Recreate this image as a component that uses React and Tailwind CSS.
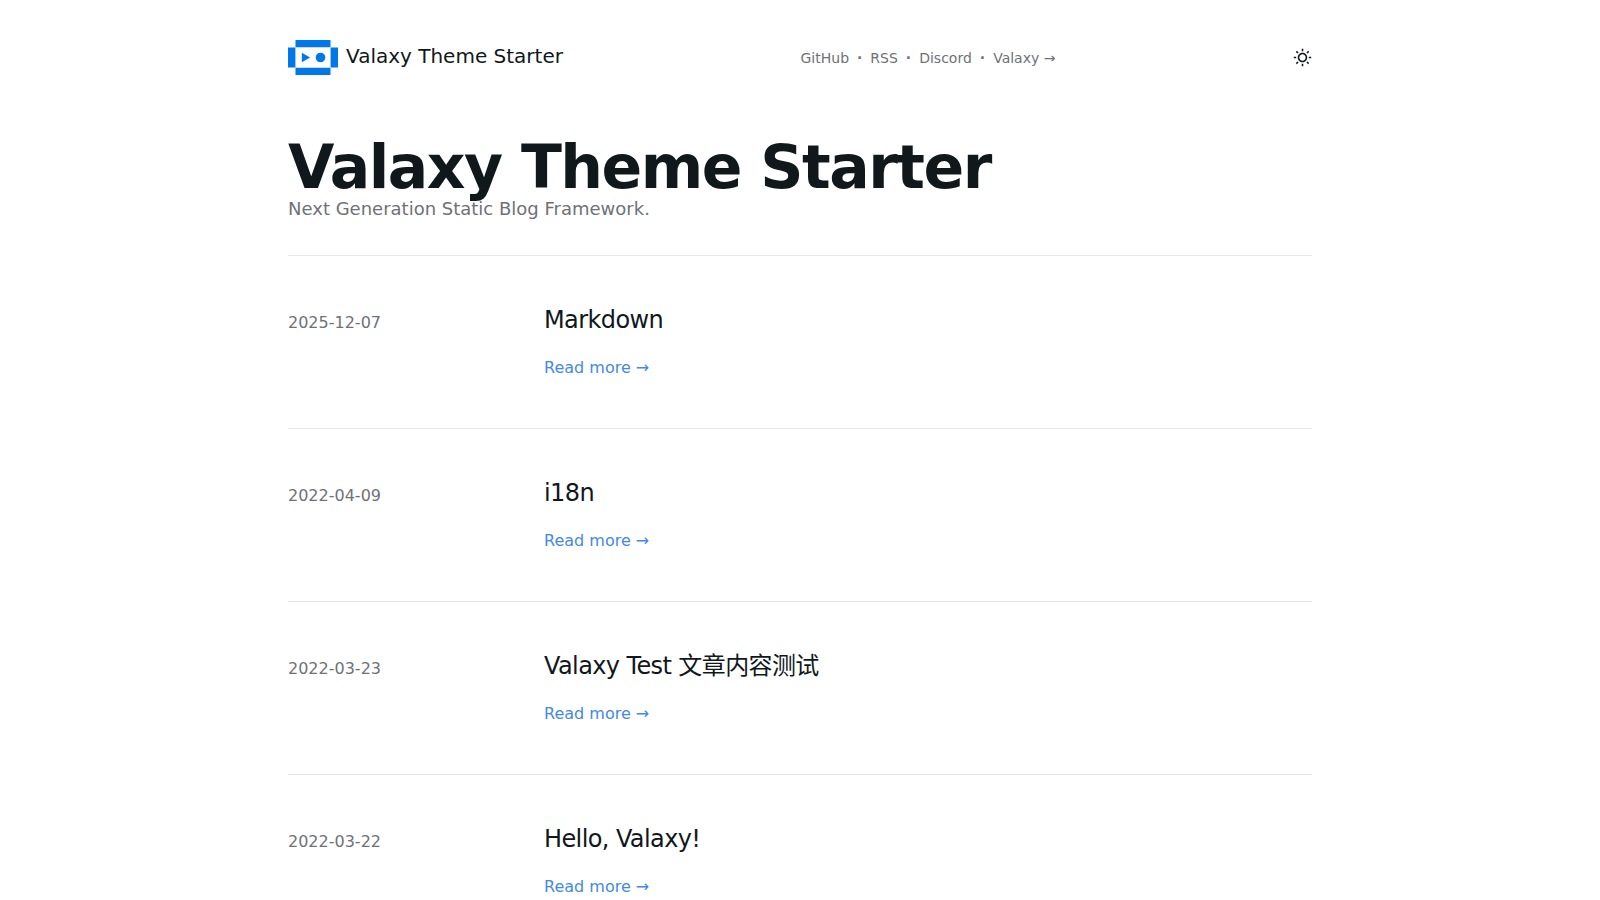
import React, { useState } from 'react';
import { RiSunLine } from 'react-icons/ri';

const navLinks = [
    { label: 'GitHub', href: '#github' },
    { label: 'RSS', href: '#rss' },
    { label: 'Discord', href: '#discord' },
    { label: 'Valaxy →', href: '#valaxy' },
];

const posts = [
    { date: '2025-12-07', title: 'Markdown', href: '#markdown' },
    { date: '2022-04-09', title: 'i18n', href: '#i18n' },
    { date: '2022-03-23', title: 'Valaxy Test 文章内容测试', href: '#test' },
    { date: '2022-03-22', title: 'Hello, Valaxy!', href: '#hello-valaxy' },
];

function Logo() {
    return (
        <svg width="50" height="35" viewBox="0 0 50 35" fill="#0078e7" aria-hidden="true">
            <path d="M7.500 0h35v7.200h-35zM7.500 27.800h35V35h-35zM0 7.600h7.400v19.800H0zM42.600 7.600H50v19.800h-7.400z" />
            <path d="M13.800 12.700v9.600l8.300-4.800z" />
            <circle cx="32.500" cy="17.500" r="4.800" />
        </svg>
    );
}

function Header({ onToggle }) {
    return (
        <header className="flex items-center justify-between py-10">
            <a href="#home" className="flex items-center gap-2 text-xl">
                <Logo />
                <span className="-mt-1">Valaxy Theme Starter</span>
            </a>
            <nav className="flex text-sm text-[#6f7177]">
                {navLinks.map((link, i) => (
                    <React.Fragment key={link.label}>
                        {i > 0 && <span className="mx-2 font-bold">·</span>}
                        <a href={link.href} className="hover:text-gray-700">{link.label}</a>
                    </React.Fragment>
                ))}
            </nav>
            <button type="button" aria-label="Toggle theme" onClick={onToggle} className="cursor-pointer">
                <RiSunLine size={19} />
            </button>
        </header>
    );
}

function PostItem({ post }) {
    return (
        <li className="grid items-baseline py-12 md:grid-cols-4">
            <time dateTime={post.date} className="text-[#6f7177]">{post.date}</time>
            <article className="space-y-5 md:col-span-3">
                <h2 className="text-2xl tracking-tight">
                    <a href={post.href}>{post.title}</a>
                </h2>
                <a href={post.href} className="block text-[#4489e6]" aria-label={`Read more: ${post.title}`}>
                    Read more →
                </a>
            </article>
        </li>
    );
}

function App() {
    const [dark, setDark] = useState(false);

    return (
        <div className={`min-h-screen font-['DejaVu_Sans','Noto_Sans_CJK_SC',sans-serif] ${dark ? 'bg-gray-900 text-gray-100' : 'bg-white text-[#11181c]'}`}>
            <div className="mx-auto max-w-5xl">
                <Header onToggle={() => setDark(!dark)} />
                <main className="divide-y divide-gray-200">
                    <div className="pt-6 pb-8">
                        <h1 className="text-6xl leading-14 font-extrabold tracking-tight">Valaxy Theme Starter</h1>
                        <p className="text-lg leading-7 text-[#6f7177]">Next Generation Static Blog Framework.</p>
                    </div>
                    <ul className="divide-y divide-gray-200">
                        {posts.map((post) => (
                            <PostItem key={post.date} post={post} />
                        ))}
                    </ul>
                </main>
            </div>
        </div>
    );
}

export default App;
